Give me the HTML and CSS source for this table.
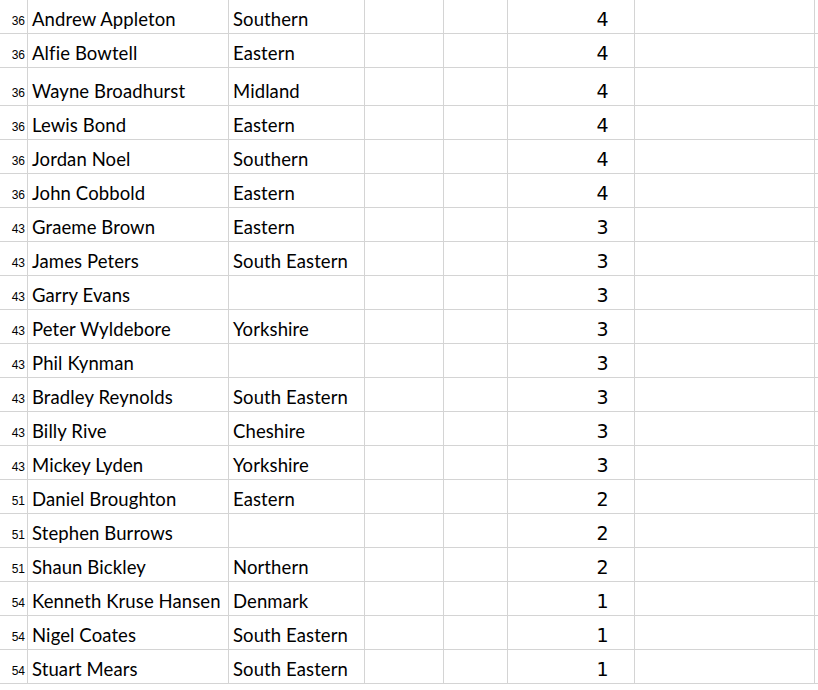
FILE: index.html
```html
<!DOCTYPE html>
<html>
<head>
<meta charset="utf-8">
<link rel="stylesheet" href="styles.css">
<title>Results</title>
</head>
<body>
<div class="sheet">
  <div class="row"><div class="c rank">36</div><div class="c name">Andrew Appleton</div><div class="c region">Southern</div><div class="c"></div><div class="c"></div><div class="c pts">4</div><div class="c"></div><div class="c end"></div></div>
  <div class="row"><div class="c rank">36</div><div class="c name">Alfie Bowtell</div><div class="c region">Eastern</div><div class="c"></div><div class="c"></div><div class="c pts">4</div><div class="c"></div><div class="c end"></div></div>
  <div class="row tall"><div class="c rank">36</div><div class="c name">Wayne Broadhurst</div><div class="c region">Midland</div><div class="c"></div><div class="c"></div><div class="c pts">4</div><div class="c"></div><div class="c end"></div></div>
  <div class="row"><div class="c rank">36</div><div class="c name">Lewis Bond</div><div class="c region">Eastern</div><div class="c"></div><div class="c"></div><div class="c pts">4</div><div class="c"></div><div class="c end"></div></div>
  <div class="row"><div class="c rank">36</div><div class="c name">Jordan Noel</div><div class="c region">Southern</div><div class="c"></div><div class="c"></div><div class="c pts">4</div><div class="c"></div><div class="c end"></div></div>
  <div class="row"><div class="c rank">36</div><div class="c name">John Cobbold</div><div class="c region">Eastern</div><div class="c"></div><div class="c"></div><div class="c pts">4</div><div class="c"></div><div class="c end"></div></div>
  <div class="row"><div class="c rank">43</div><div class="c name">Graeme Brown</div><div class="c region">Eastern</div><div class="c"></div><div class="c"></div><div class="c pts">3</div><div class="c"></div><div class="c end"></div></div>
  <div class="row"><div class="c rank">43</div><div class="c name">James Peters</div><div class="c region">South Eastern</div><div class="c"></div><div class="c"></div><div class="c pts">3</div><div class="c"></div><div class="c end"></div></div>
  <div class="row"><div class="c rank">43</div><div class="c name">Garry Evans</div><div class="c region"></div><div class="c"></div><div class="c"></div><div class="c pts">3</div><div class="c"></div><div class="c end"></div></div>
  <div class="row"><div class="c rank">43</div><div class="c name">Peter Wyldebore</div><div class="c region">Yorkshire</div><div class="c"></div><div class="c"></div><div class="c pts">3</div><div class="c"></div><div class="c end"></div></div>
  <div class="row"><div class="c rank">43</div><div class="c name">Phil Kynman</div><div class="c region"></div><div class="c"></div><div class="c"></div><div class="c pts">3</div><div class="c"></div><div class="c end"></div></div>
  <div class="row"><div class="c rank">43</div><div class="c name">Bradley Reynolds</div><div class="c region">South Eastern</div><div class="c"></div><div class="c"></div><div class="c pts">3</div><div class="c"></div><div class="c end"></div></div>
  <div class="row"><div class="c rank">43</div><div class="c name">Billy Rive</div><div class="c region">Cheshire</div><div class="c"></div><div class="c"></div><div class="c pts">3</div><div class="c"></div><div class="c end"></div></div>
  <div class="row"><div class="c rank">43</div><div class="c name">Mickey Lyden</div><div class="c region">Yorkshire</div><div class="c"></div><div class="c"></div><div class="c pts">3</div><div class="c"></div><div class="c end"></div></div>
  <div class="row"><div class="c rank">51</div><div class="c name">Daniel Broughton</div><div class="c region">Eastern</div><div class="c"></div><div class="c"></div><div class="c pts">2</div><div class="c"></div><div class="c end"></div></div>
  <div class="row"><div class="c rank">51</div><div class="c name">Stephen Burrows</div><div class="c region"></div><div class="c"></div><div class="c"></div><div class="c pts">2</div><div class="c"></div><div class="c end"></div></div>
  <div class="row"><div class="c rank">51</div><div class="c name">Shaun Bickley</div><div class="c region">Northern</div><div class="c"></div><div class="c"></div><div class="c pts">2</div><div class="c"></div><div class="c end"></div></div>
  <div class="row"><div class="c rank">54</div><div class="c name">Kenneth Kruse Hansen</div><div class="c region">Denmark</div><div class="c"></div><div class="c"></div><div class="c pts">1</div><div class="c"></div><div class="c end"></div></div>
  <div class="row"><div class="c rank">54</div><div class="c name">Nigel Coates</div><div class="c region">South Eastern</div><div class="c"></div><div class="c"></div><div class="c pts">1</div><div class="c"></div><div class="c end"></div></div>
  <div class="row"><div class="c rank">54</div><div class="c name">Stuart Mears</div><div class="c region">South Eastern</div><div class="c"></div><div class="c"></div><div class="c pts">1</div><div class="c"></div><div class="c end"></div></div>
</div>
</body>
</html>
```

FILE: styles.css
```css
html, body {
  margin: 0;
  padding: 0;
  background: #ffffff;
}

.sheet {
  width: 818px;
  overflow: hidden;
  color: #000;
}

.row {
  display: grid;
  grid-template-columns: 28px 201px 136px 79px 64px 127px 180px 3px;
  height: 34px;
}

.row.tall {
  height: 38px;
}

.c {
  border-right: 1px solid #d4d4d4;
  border-bottom: 1px solid #d4d4d4;
  display: flex;
  align-items: flex-end;
  white-space: nowrap;
  overflow: hidden;
}

.c.end {
  border-right: none;
}

.rank {
  justify-content: flex-end;
  padding-right: 2px;
  padding-bottom: 6px;
  font-family: "Liberation Sans", Arial, sans-serif;
  font-size: 12px;
  line-height: 12px;
}

.name,
.region {
  padding-left: 4px;
  padding-bottom: 3px;
  font-family: Lato, "Open Sans", sans-serif;
  font-size: 18.5px;
  line-height: 22px;
  letter-spacing: 0.1px;
}

.pts {
  justify-content: center;
  padding-left: 63px;
  padding-bottom: 3px;
  font-family: "DejaVu Sans", sans-serif;
  font-size: 19px;
  line-height: 22px;
}
```
